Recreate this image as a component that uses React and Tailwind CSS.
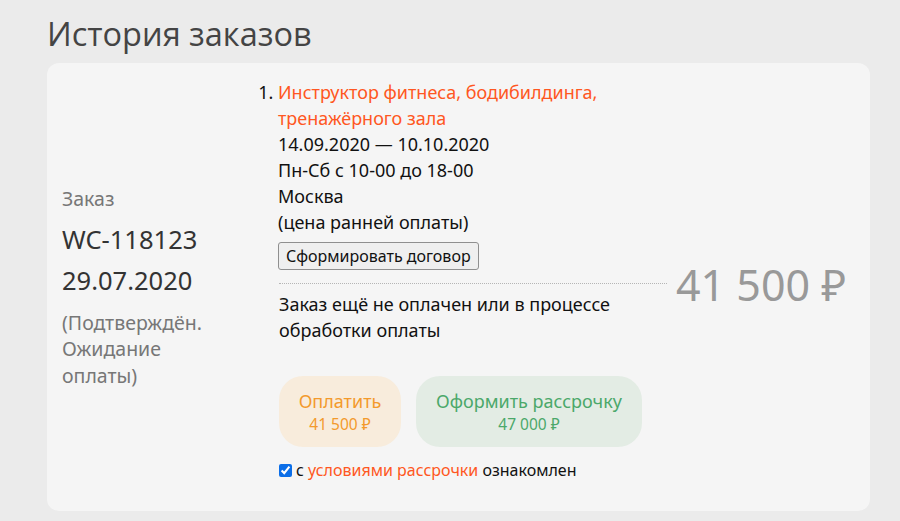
import React from "react";

const body = { fontFamily: '"Noto Sans", "Open Sans", sans-serif' };

export default function App() {
  return (
    <div className="min-h-[521px] bg-[#ebebeb] px-[47px] pt-[12px] pb-[10px]" style={body}>
      {/* --- Heading --- */}
      <h1
        className="text-[32.5px] leading-[44px] text-[#444] mb-[7px]"
        style={{ fontFamily: '"Open Sans", sans-serif' }}
      >
        История заказов
      </h1>

      {/* --- Order card --- */}
      <div className="w-[823px] rounded-[12px] bg-[#f5f5f5] flex items-center pt-[16px] pb-[30px]">
        {/* order meta */}
        <div className="w-[212px] pl-[15px] shrink-0 mt-[14px]">
          <div className="text-[19.5px] leading-[28px] text-[#777]">Заказ</div>
          <div className="text-[25.5px] leading-[41px] text-[#333] mt-[6px]">WC-118123</div>
          <div className="text-[25.5px] leading-[41px] text-[#333]">29.07.2020</div>
          <div className="text-[19.5px] leading-[26.5px] text-[#777] mt-[9px]">
            (Подтверждён.
            <br />
            Ожидание
            <br />
            оплаты)
          </div>
        </div>

        {/* order items + payment */}
        <div className="w-[408px] shrink-0 pl-[20px] text-[18px] leading-[26px] text-[#111]">
          <ol className="list-decimal -ml-[1px]">
            <li>
              <a className="text-[#ff5722]">Инструктор фитнеса, бодибилдинга, тренажёрного зала</a>
              <div>14.09.2020 — 10.10.2020</div>
              <div>Пн-Сб с 10-00 до 18-00</div>
              <div>Москва</div>
              <div>(цена ранней оплаты)</div>
              <button className="mt-[7px] px-[7px] h-[28px] text-[16px] leading-[26px] text-[#111] bg-[#efefef] border border-[#8f8f8f] rounded-[3px]">
                Сформировать договор
              </button>
            </li>
          </ol>
          <div className="border-t border-dotted border-[#b5b5b5] mt-[13px] mb-[7px]" />
          <p>
            Заказ ещё не оплачен или в процессе
            <br />
            обработки оплаты
          </p>

          <div className="flex gap-[15px] mt-[33px]">
            <button className="w-[122px] h-[71px] rounded-[24px] bg-[#f8ecdc] text-[#f39a2c] flex flex-col items-center justify-center">
              <span className="text-[18px] leading-[24px]">Оплатить</span>
              <span className="text-[15.5px] leading-[22px]">41 500 ₽</span>
            </button>
            <button className="w-[226px] h-[71px] rounded-[24px] bg-[#e3ece4] text-[#4ba86a] flex flex-col items-center justify-center">
              <span className="text-[18px] leading-[24px]">Оформить рассрочку</span>
              <span className="text-[15.5px] leading-[22px]">47 000 ₽</span>
            </button>
          </div>

          <label className="flex items-center gap-[4px] mt-[12px] text-[16px] leading-[22px]">
            <input type="checkbox" defaultChecked className="w-[13px] h-[13px] accent-[#0b6ee8]" />
            <span>
              с <a className="text-[#ff5722]">условиями рассрочки</a> ознакомлен
            </span>
          </label>
        </div>

        {/* total */}
        <div className="flex-1 pl-[9px] mt-[10px] text-[43px] leading-[56px] text-[#999]">41 500 ₽</div>
      </div>
    </div>
  );
}
